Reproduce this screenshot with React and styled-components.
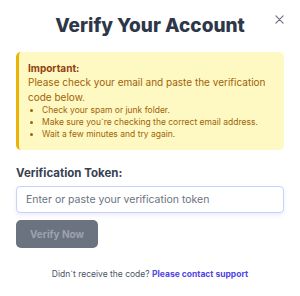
import React from "react";
import styled, { createGlobalStyle } from "styled-components";

const GlobalStyle = createGlobalStyle`
  body {
    margin: 0;
    background: #ffffff;
    font-family: "Inter", "Noto Sans", sans-serif;
  }
  * { box-sizing: border-box; }
`;

const App = () => {
  return (
    <>
      <GlobalStyle />
      <Modal>
        <CloseButton aria-label="Close">
          <svg width="9" height="9" viewBox="0 0 10 10">
            <path d="M1 1 L9 9 M9 1 L1 9" stroke="#6b7280" strokeWidth="1.3" strokeLinecap="round" />
          </svg>
        </CloseButton>
        <Title>Verify Your Account</Title>
        <Notice>
          <NoticeHead>Important:</NoticeHead>
          <NoticeText>Please check your email and paste the verification code below.</NoticeText>
          <Tips>
            <li>Check your spam or junk folder.</li>
            <li>Make sure you`re checking the correct email address.</li>
            <li>Wait a few minutes and try again.</li>
          </Tips>
        </Notice>
        <Label htmlFor="token">Verification Token:</Label>
        <Input id="token" placeholder="Enter or paste your verification token" />
        <VerifyButton disabled>Verify Now</VerifyButton>
        <Footer>
          Didn`t receive the code? <SupportLink href="#">Please contact support</SupportLink>
        </Footer>
      </Modal>
    </>
  );
};

export default App;

const Modal = styled.div`
  position: relative;
  width: 300px;
  height: 296px;
  padding: 12px 16px 0;
  display: flex;
  flex-direction: column;
  background: #ffffff;
`;

const CloseButton = styled.button`
  position: absolute;
  top: 12px;
  right: 14px;
  width: 14px;
  height: 14px;
  padding: 0;
  border: none;
  background: transparent;
  display: flex;
  align-items: center;
  justify-content: center;
  cursor: pointer;
`;

const Title = styled.h2`
  margin: 0;
  text-align: center;
  font-size: 19px;
  line-height: 28px;
  font-weight: 800;
  color: #2d3748;
`;

const Notice = styled.div`
  margin-top: 12px;
  padding: 9px 8px 10px 9px;
  background: #fef9c3;
  border-left: 3px solid #eab308;
  border-radius: 5px;
  color: #a16207;
`;

const NoticeHead = styled.div`
  font-size: 10px;
  font-weight: 700;
  line-height: 14px;
  color: #92400e;
`;

const NoticeText = styled.p`
  margin: 0;
  font-size: 10px;
  line-height: 14.5px;
`;

const Tips = styled.ul`
  margin: 0;
  padding-left: 14px;
  font-size: 8.5px;
  line-height: 12px;
  li::marker {
    font-size: 8px;
  }
`;

const Label = styled.label`
  margin-top: 15px;
  font-size: 11.5px;
  line-height: 16px;
  font-weight: 700;
  color: #374151;
`;

const Input = styled.input`
  margin-top: 5px;
  height: 27px;
  width: 100%;
  padding: 0 9px;
  border: 1px solid #c7d2fe;
  border-radius: 4px;
  box-shadow: 0 2px 4px rgba(99, 102, 241, 0.12);
  font-family: inherit;
  font-size: 10.5px;
  color: #374151;
  outline: none;
  &::placeholder {
    color: #6b7280;
  }
`;

const VerifyButton = styled.button`
  margin-top: 7px;
  align-self: flex-start;
  width: 82px;
  height: 28px;
  border: none;
  border-radius: 5px;
  background: #6b7280;
  color: #9ca3af;
  font-family: inherit;
  font-size: 10px;
  font-weight: 700;
  &:disabled {
    cursor: not-allowed;
  }
`;

const Footer = styled.p`
  margin: 20px 0 0;
  text-align: center;
  font-size: 8.5px;
  line-height: 12px;
  color: #4b5563;
`;

const SupportLink = styled.a`
  color: #4f46e5;
  font-weight: 700;
  text-decoration: none;
`;
